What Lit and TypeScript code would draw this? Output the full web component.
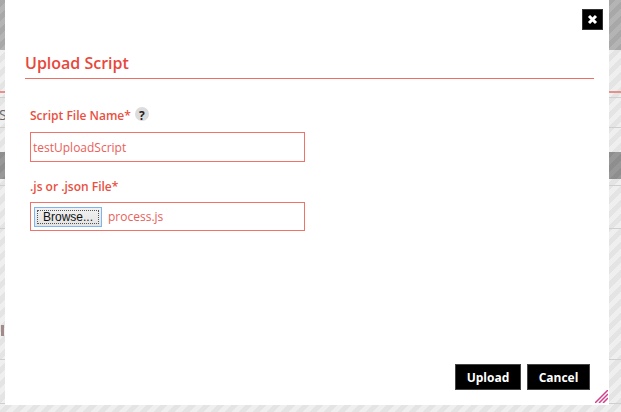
import { LitElement, html, css } from "lit";
import { customElement } from "lit/decorators.js";

@customElement("app-root")
export class AppRoot extends LitElement {
  static styles = css`
    :host { display: block; width: 621px; height: 412px; overflow: hidden; position: relative; font-family: "Open Sans", sans-serif;
      background: repeating-linear-gradient(135deg, #e4e4e4 0 5px, #efefef 5px 10px); }
    .bg { position: absolute; left: 0; right: 0; }
    .dark { background: repeating-linear-gradient(135deg, #a8a8a8 0 5px, #b4b4b4 5px 10px); }
    .g1 { top: 0; height: 50px; }
    .g2 { top: 152px; height: 27px; background: repeating-linear-gradient(135deg, #8e8e8e 0 5px, #989898 5px 10px); }
    .red { top: 91px; height: 2px; background: #e3918a; }
    .l { height: 1px; background: #cfcfcf; }
    .s { position: absolute; left: -1px; top: 105px; font-size: 14px; color: #666; }
    .j { position: absolute; left: 1px; top: 325px; width: 3px; height: 11px; background: #a08a8a; }
    .dialog { position: absolute; left: 5px; top: 0; width: 604px; height: 405px; background: #fff; box-sizing: border-box; padding: 9px 15px 15px 20px; display: flex; flex-direction: column; }
    .top { display: flex; justify-content: flex-end; margin-right: -9px; }
    .close { width: 21px; height: 21px; background: #000; display: grid; place-items: center; box-shadow: inset 0 0 0 1px #333; }
    h2 { margin: 21px 0 0; font-size: 16px; line-height: 24px; font-weight: 600; color: #e8473c; padding-bottom: 3px; border-bottom: 1px solid #ec6f65; }
    label { font-weight: 600; font-size: 12px; line-height: 18px; color: #e9503f; display: flex; align-items: center; gap: 4px; margin-left: 5px; }
    .f1 { margin-top: 28px; height: 17px; }
    .f2 { margin-top: 16px; height: 17px; }
    .help { width: 14px; height: 14px; border-radius: 50%; background: #dcdcdc; color: #222; font-size: 12px; font-weight: 700; display: grid; place-items: center; margin-top: -3px; }
    .box { margin: 8px 0 0 5px; width: 275px; height: 30px; box-sizing: border-box; border: 1px solid #f0736a; display: flex; align-items: center; padding-left: 2px; font-size: 12px; color: #e9605a; }
    .b2 { height: 29px; padding-left: 3px; gap: 6px; margin-top: 7px; }
    .browse { width: 68px; height: 20px; box-sizing: border-box; border: 1px solid #7db5ec; background: linear-gradient(#f2f2f2, #e3e3e3); padding: 2px; font-family: "Liberation Sans", sans-serif; font-size: 12px; color: #111; }
    .browse span { display: block; height: 100%; box-sizing: border-box; outline: 1px dotted #555; outline-offset: -1px; text-align: center; line-height: 14px; }
    .foot { margin-top: auto; display: flex; justify-content: flex-end; gap: 6px; margin-right: 4px; }
    .btn { background: #000; color: #fff; font-weight: 700; font-size: 12px; height: 26px; display: grid; place-items: center; box-shadow: inset 0 0 0 1px #444; }
    .up { width: 66px; }
    .can { width: 63px; }
    .grip { position: absolute; right: 1px; bottom: 2px; width: 13px; height: 13px; }
  </style>
  `;
  render() {
    return html`
      <div class="bg dark g1"></div>
      <div class="bg red"></div>
      <div class="bg l" style="top:97px"></div>
      <div class="bg l" style="top:127px"></div>
      <div class="bg g2"></div>
      <div class="bg l" style="top:185px"></div>
      <div class="bg l" style="top:228px"></div>
      <div class="bg l" style="top:359px"></div>
      <div class="bg l" style="top:403px"></div>
      <div class="s">S</div>
      <div class="j"></div>
      <div class="dialog">
        <div class="top"><div class="close">
          <svg width="11" height="11" viewBox="0 0 11 11"><path d="M2 2 L9 9 M9 2 L2 9" stroke="#fff" stroke-width="3"/></svg>
        </div></div>
        <h2>Upload Script</h2>
        <label class="f1">Script File Name* <span class="help">?</span></label>
        <div class="box">testUploadScript</div>
        <label class="f2">.js or .json File*</label>
        <div class="box b2"><div class="browse"><span>Browse...</span></div>process.js</div>
        <div class="foot"><div class="btn up">Upload</div><div class="btn can">Cancel</div></div>
        <svg class="grip" viewBox="0 0 13 13"><path d="M0 13 L13 0 M4 13 L13 4 M8 13 L13 8" stroke="#d0408f" stroke-width="1.5"/></svg>
      </div>`;
  }
}
